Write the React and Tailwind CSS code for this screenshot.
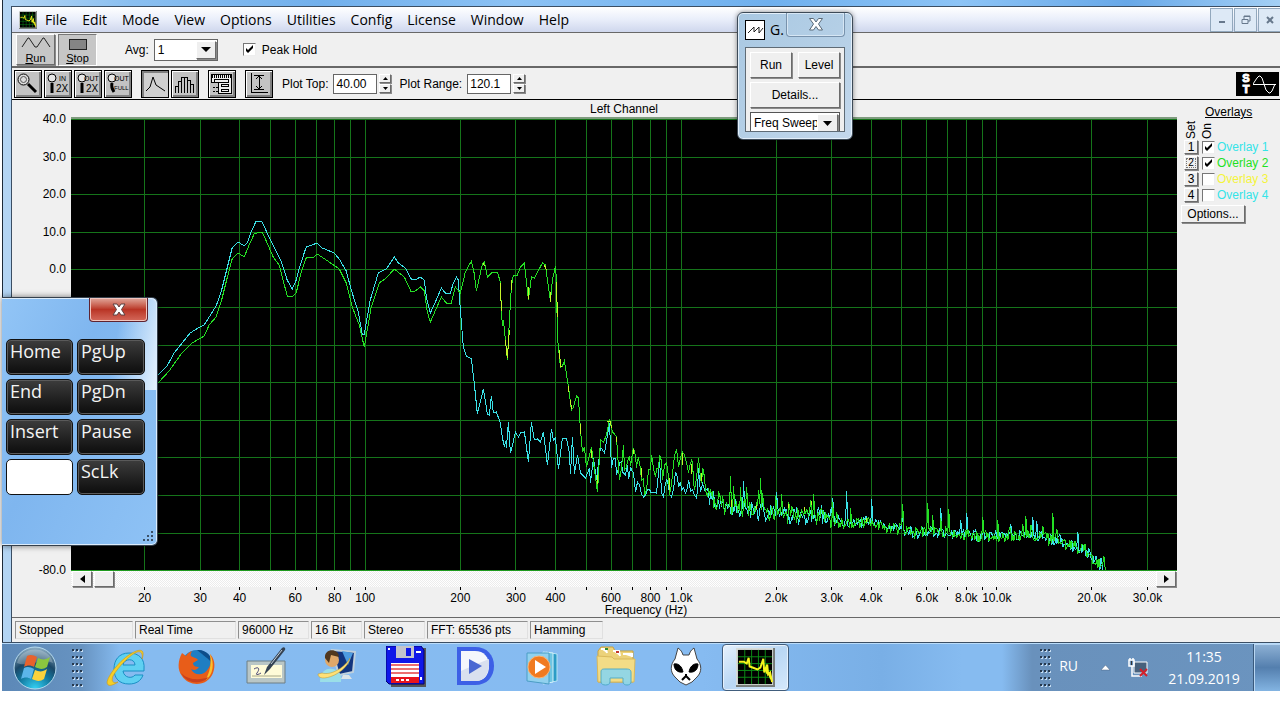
import { useState } from "react";

const MENU = ["File", "Edit", "Mode", "View", "Options", "Utilities", "Config", "License", "Window", "Help"];
const KEYS = ["Home", "PgUp", "End", "PgDn", "Insert", "Pause", "", "ScLk"];

// plot area in trace coordinates
const X0 = 72;
const Y0 = 119;
const PW = 1105;
const PH = 452;

const FREQS = [20, 30, 40, 50, 60, 70, 80, 90, 100, 200, 300, 400, 500, 600, 700, 800, 900, 1000, 2000, 3000, 4000, 5000, 6000, 7000, 8000, 9000, 10000, 20000, 30000];
const FREQ_LABELS = {
  20: "20", 30: "30", 40: "40", 60: "60", 80: "80", 100: "100",
  200: "200", 300: "300", 400: "400", 600: "600", 800: "800", 1000: "1.0k",
  2000: "2.0k", 3000: "3.0k", 4000: "4.0k", 6000: "6.0k", 8000: "8.0k", 10000: "10.0k",
  20000: "20.0k", 30000: "30.0k",
};
// levels not covered by the key pad
const LEVELS = [40, 30, 20, 10, 0, -80];

function freqPct(f) {
  const x = 73.5 + Math.log10(f / 20) * 315.5;
  return `${(x / PW) * 100}%`;
}

const CYAN = [
  [72, 452], [110, 415], [140, 393], [158, 376], [168, 366], [175, 353], [191, 333], [199, 328], [205, 325], [217, 306], [222, 292], [227, 272],
  [233, 248], [239, 242], [245, 246], [248, 243], [252, 232], [257, 221], [263, 222], [268, 233], [282, 261], [288, 280],
  [293, 289], [297, 280], [300, 268], [307, 247], [318, 243], [323, 248], [335, 253], [340, 259], [347, 271], [352, 290],
  [359, 312], [363, 334], [365, 334], [371, 300], [379, 273], [387, 269], [395, 257], [399, 263], [406, 268], [412, 279],
  [416, 280], [421, 277], [425, 280], [427, 297], [431, 313], [436, 302], [442, 288], [446, 293], [451, 293], [454, 283],
  [457, 277], [459, 280], [461, 310], [464, 347], [467, 356], [472, 359], [475, 384], [478, 414], [484, 389], [488, 414], [490, 415],
  [492, 396], [494, 413], [497, 412], [501, 423], [503, 438], [505, 446], [507, 440], [507, 448], [509, 422], [511, 453], [514, 441], [516, 432], [519, 437], [521, 433],
  [525, 432], [529, 462], [532, 422], [535, 440], [538, 439], [541, 442], [544, 432], [548, 465], [552, 429], [554, 440], [556, 438], [559, 469],
  [563, 438], [567, 438], [570, 453], [571, 474], [573, 437], [575, 474], [578, 455], [581, 473], [586, 478], [590, 468], [591, 483],
  [594, 458], [597, 480], [601, 447], [605, 453], [610, 423], [612, 468], [614, 458], [617, 475], [620, 463], [623, 472],
  [628, 465], [630, 475], [632, 470], [636, 492], [640, 485], [644, 497], [648, 489], [651, 492], [657, 493], [660, 462], [662, 493], [665, 488], [668, 481], [670, 494],
  [674, 489], [676, 472], [679, 487], [682, 490], [686, 493], [689, 480], [693, 490], [697, 498], [699, 468], [701, 492], [705, 490],
];

const GREEN = [
  [72, 460], [110, 425], [140, 401], [158, 384], [170, 371], [182, 354], [193, 343], [205, 336], [210, 325], [217, 317], [222, 302], [228, 278],
  [233, 259], [239, 253], [245, 257], [250, 245], [255, 234], [260, 232], [263, 232], [268, 243], [274, 257], [280, 265],
  [288, 296], [293, 297], [297, 293], [302, 272], [307, 258], [315, 257], [318, 254], [327, 260], [340, 269], [347, 283],
  [353, 307], [360, 325], [365, 347], [372, 307], [380, 283], [387, 278], [395, 269], [405, 277], [412, 292], [416, 291],
  [421, 287], [425, 291], [428, 312], [431, 322], [442, 297], [447, 303], [452, 303], [456, 287], [461, 293], [466, 272],
  [472, 261], [475, 274], [477, 291], [483, 264], [485, 262], [488, 277], [493, 272], [498, 272], [501, 282], [502, 310], [503, 326],
  [504, 320], [508, 360], [510, 320], [512, 287], [514, 275], [518, 275], [521, 267], [525, 263], [529, 300], [532, 277],
  [535, 278], [543, 263], [546, 265], [549, 287], [551, 301], [553, 280], [556, 266], [557, 280], [558, 337], [561, 367],
  [563, 366], [565, 361], [569, 387], [572, 410], [574, 407], [577, 396], [579, 398], [581, 430], [583, 452], [585, 447],
  [587, 467], [592, 447], [595, 470], [598, 492], [601, 440], [604, 442], [607, 435], [610, 419], [613, 432], [617, 437],
  [620, 480], [624, 445], [625, 470], [628, 461], [631, 466], [634, 448], [637, 468], [639, 458], [642, 480], [645, 495], [649, 470], [652, 455], [656, 477],
  [658, 468], [660, 455], [663, 480], [667, 463], [670, 495], [673, 473], [677, 449], [679, 467], [683, 452], [687, 463], [690, 466], [693, 463], [695, 490],
  [699, 458], [702, 483], [704, 470], [707, 494],
];

const FLOOR = [
  [708, 496], [725, 506], [750, 510], [775, 514], [800, 516], [830, 518], [850, 524], [870, 521], [885, 528], [905, 529],
  [915, 533], [930, 531], [945, 533], [960, 534], [975, 536], [1000, 536], [1020, 536], [1030, 533], [1045, 538], [1060, 540],
  [1070, 545], [1085, 550], [1092, 556], [1098, 562], [1103, 569], [1106, 570],
];
const CYAN_PEAKS = { 744: 481, 777: 492, 822: 505, 833: 498, 847: 491, 872: 499, 903: 506, 941: 508, 961: 520, 967: 513, 1011: 524, 1026: 518, 1033: 517, 1037: 521, 1078: 532, 1101: 558 };
const GREEN_PEAKS = { 713: 491, 719: 491, 731: 476, 734: 486, 741: 487, 747: 487, 759: 490, 761: 478, 763: 493, 776: 496, 782: 494, 789: 502, 811: 500, 814: 494, 833: 502, 851: 508, 862: 517, 903: 504, 928: 503, 933: 515, 941: 518, 949: 509, 983: 517, 998: 520, 1010: 527, 1023: 524, 1026: 516, 1031: 525, 1043: 526, 1053: 513, 1057: 529, 1104: 556 };

function floorAt(x) {
  for (let i = 1; i < FLOOR.length; i++) {
    if (x <= FLOOR[i][0]) {
      const [ax, ay] = FLOOR[i - 1];
      const [bx, by] = FLOOR[i];
      return ay + ((x - ax) / (bx - ax)) * (by - ay);
    }
  }
  return 570;
}

function noise(n) {
  const s = Math.sin(n * 12.9898) * 43758.5453;
  return (s - Math.floor(s)) * 2 - 1;
}

// adds a jittered midpoint between the hand-picked points above 600 Hz
function roughen(pts, seed) {
  const out = [];
  pts.forEach(([x, y], i) => {
    out.push([x, y]);
    const next = pts[i + 1];
    if (next && x > 612 && next[0] - x > 1) {
      out.push([Math.round((x + next[0]) / 2), Math.round((y + next[1]) / 2 + noise(x + seed) * 9)]);
    }
  });
  return out;
}

function tail(seed, peaks) {
  const pts = [];
  for (let x = 708; x <= 1105; x++) {
    const amp = x < 840 ? 9 : 6;
    const y = peaks[x] || floorAt(x) + noise(x + seed) * amp;
    pts.push([x, Math.min(570, Math.round(y))]);
  }
  return pts;
}

const toPoints = (pts) => pts.map((p) => p.join(",")).join(" ");
const cyanLine = toPoints([...roughen(CYAN, 5), ...tail(3, CYAN_PEAKS)]);
const greenLine = toPoints([...roughen(GREEN, 9), ...tail(77, GREEN_PEAKS), [1106, 570], [1177, 570]]);

const raised = "border border-t-white border-l-white border-r-[#6b6b6b] border-b-[#6b6b6b] shadow-[1px_1px_0_#8a8a8a]";

function Plot() {
  return (
    <svg className="block w-full h-[452px] bg-black" shapeRendering="crispEdges" role="img" aria-label="Left Channel spectrum">
      {FREQS.map((f) => (
        <line key={f} x1={freqPct(f)} x2={freqPct(f)} y1="0" y2="452" stroke="#15741a" />
      ))}
      {[...Array(13)].map((_, i) => (
        <line key={i} x1="0" x2="100%" y1={i * 37.6 + 0.5} y2={i * 37.6 + 0.5} stroke="#15741a" />
      ))}
      <svg width="100%" height="452" viewBox={`${X0} ${Y0} ${PW} ${PH}`} preserveAspectRatio="none" fill="none">
        <polyline points={cyanLine} stroke="#3be2e8" />
        <polyline points={greenLine} stroke="#24e024" />
        <path
          stroke="#c6f52a"
          d="M484 263l1 3M501 283l1 28M506 340l2 18l2 -28M512 290v-10M529 299v-12M545 265l2 5M551 292v10M557 282l1 35M560 350l1 16h2M569 386v6M571 400l1 9M581 424v10M592 450v8M598 475v9M608 421h3l1 7M617 437v5M634 449v5M642 468v9M670 478v12M683 453v12M692 464v10M702 473v8M732 500v7M757 505v4M789 508v-4M805 507v4M812 505v-4M867 522v-4"
        />
      </svg>
      <line x1="0" x2="100%" y1="451.5" y2="451.5" stroke="#1f9a1f" />
    </svg>
  );
}

function FreqAxis() {
  return (
    <svg className="block w-full h-[17px] overflow-visible text-xs">
      {FREQS.map((f) => (
        <g key={f}>
          <line x1={freqPct(f)} x2={freqPct(f)} y1="0" y2="3" stroke="#000" shapeRendering="crispEdges" />
          {FREQ_LABELS[f] && <text x={freqPct(f)} y="15" textAnchor="middle">{FREQ_LABELS[f]}</text>}
        </g>
      ))}
    </svg>
  );
}

function LevelAxis() {
  return (
    <svg className="block w-full h-[452px] overflow-visible text-xs">
      {LEVELS.map((db) => (
        <text key={db} x="54" y={(40 - db) * 3.76 + 4} textAnchor="end">{db.toFixed(1)}</text>
      ))}
    </svg>
  );
}

function CheckBox({ label, checked, className, textClass }) {
  const [on, setOn] = useState(checked);
  return (
    <label className={`flex items-center whitespace-nowrap ${className || ""}`}>
      <span className="relative block size-[13px] shrink-0">
        <input
          type="checkbox"
          checked={on}
          onChange={() => setOn(!on)}
          className="block size-[13px] appearance-none border border-t-[#777] border-l-[#777] border-r-[#eee] border-b-[#eee] bg-white"
        />
        {on && (
          <svg className="pointer-events-none absolute inset-0" width="13" height="13" viewBox="0 0 13 13">
            <path d="M3 5v3l2 2 5-5V2L5 7z" fill="#000" />
          </svg>
        )}
      </span>
      <span className={textClass}>{label}</span>
    </label>
  );
}

function ToolButton({ label, pressed, children }) {
  return (
    <button aria-label={label} className={`size-7 shrink-0 border border-black ${pressed ? "bg-[#d0d0d0] shadow-[inset_2px_2px_0_#808080]" : "bg-[#c3c3c3] shadow-[inset_1px_1px_0_#fff,inset_-2px_-2px_0_#808080]"}`}>
      <svg width="26" height="26" viewBox="0 0 26 26" fill="none" stroke="#000" shapeRendering="crispEdges">{children}</svg>
    </button>
  );
}

function ZoomTool({ label, top, bottom }) {
  const full = bottom === "FULL";
  return (
    <ToolButton label={label}>
      <g shapeRendering="auto">
        <circle cx="7" cy="7" r="4" fill="#e8e8e8" />
        <path d={full ? "M7 12c-1 4 0 6 2 9" : "M7 12v10"} strokeWidth="3" />
      </g>
      <g fill="#000" stroke="none">
        <text x={top === "IN" ? 14 : 9} y="10" fontSize="7">{top}</text>
        <text x={full ? 9 : 11} y={full ? 19 : 21} fontSize={full ? 6 : 10}>{bottom}</text>
      </g>
    </ToolButton>
  );
}

function Spinner({ name }) {
  const btn = `flex h-[9px] w-3 items-center justify-center bg-[#efefef] ${raised}`;
  return (
    <span className="mr-2 ml-[2px] flex flex-col gap-px">
      <button aria-label={`${name} up`} className={btn}><svg width="5" height="3"><path d="M0 3L2.5 0 5 3z" /></svg></button>
      <button aria-label={`${name} down`} className={btn}><svg width="5" height="3"><path d="M0 0L2.5 3 5 0z" /></svg></button>
    </span>
  );
}

function NumberField({ label, value }) {
  return (
    <>
      <label className="flex items-center gap-[5px] whitespace-nowrap">
        {label}
        <input defaultValue={value} className="h-5 w-11 border border-[#666] bg-white px-[2px] text-xs" />
      </label>
      <Spinner name={label} />
    </>
  );
}

function SpectrumIcon({ className }) {
  return (
    <svg className={className} viewBox="0 0 40 40" fill="none" aria-hidden="true">
      <rect width="40" height="40" fill="#777b78" />
      <rect width="38" height="38" fill="#d8dcd8" />
      <rect x="2" y="2" width="35" height="35" fill="#000" />
      <path d="M9 2v35M16 2v35M23 2v35M30 2v35M2 9h35M2 16h35M2 23h35M2 30h35" stroke="#0b8a16" />
      <path d="M3 14L8 14L11 16L13 10L14 19L17 20L22 22L25 20L28 11L29 25L32 17L33 27L35 25L37 35" stroke="#f5f51c" strokeWidth="2" />
      <path d="M30 20l2 6 2 1 2 5" stroke="#f5f51c" strokeWidth="2" />
    </svg>
  );
}

function TopBars() {
  const mdi = "flex h-6 w-[23px] items-center justify-center border border-[#92a8bd] bg-[#dde9f6]";
  return (
    <>
      <nav className="flex h-[25px] items-center bg-linear-to-b from-white via-[#e9eefa] to-[#cfd7ed] pl-[7px] font-['Open_Sans',sans-serif] text-sm">
        <SpectrumIcon className="mr-2 size-[18px]" />
        <div className="flex flex-1 gap-[15px]">
          {MENU.map((m) => <button key={m}>{m}</button>)}
        </div>
        <div className="-mr-px flex gap-px">
          <button aria-label="Minimize" className={mdi}><svg width="8" height="8"><path d="M1 6h6" stroke="#67788c" strokeWidth="2" /></svg></button>
          <button aria-label="Restore" className={mdi}><svg width="10" height="10" fill="none" stroke="#67788c"><path d="M3 4V1h6v5H7M1 4.5h6v4H1zM3 1.5h6" /></svg></button>
          <button aria-label="Close" className={mdi}><svg width="8" height="8"><path d="M1 1l6 6M7 1L1 7" stroke="#67788c" strokeWidth="2" /></svg></button>
        </div>
      </nav>
      <div className="flex h-9 items-center border-t border-b-2 border-[#686868] pl-1">
        <button className={`flex h-[31px] w-[39px] flex-col items-center bg-[#c6c6c6] text-[11px] leading-3 ${raised}`}>
          <svg width="32" height="17" fill="none" stroke="#222"><path d="M2 12L8 3h1l6 9h2l6-9h1l6 9" /></svg>
          <span><u>R</u>un</span>
        </button>
        <button className="ml-[3px] flex h-[32px] w-[39px] flex-col items-center border border-t-[#777] border-l-[#777] border-r-white border-b-white bg-[#c6c6c6] text-[11px] leading-3">
          <svg width="20" height="17"><rect x="1.5" y="4.5" width="17" height="10" fill="#858585" stroke="#222" /></svg>
          <span><u>S</u>top</span>
        </button>
        <label className="ml-7 flex items-center gap-[5px]">
          Avg:
          <span className="relative block">
            <select className="block h-[22px] w-16 appearance-none border border-[#666] bg-white pl-[3px] text-xs">
              <option>1</option>
            </select>
            <span className={`pointer-events-none absolute top-[2px] right-[2px] flex h-[18px] w-5 items-center justify-center bg-[#efefef] ${raised}`}>
              <svg width="10" height="5"><path d="M0 0h10L5 5z" /></svg>
            </span>
          </span>
        </label>
        <CheckBox label="Peak Hold" checked className="ml-[25px]" textClass="ml-[6px]" />
      </div>
      <div className="flex h-8 items-center border-b border-black pl-[2px]">
        <div className="flex gap-[2px]">
          <ToolButton label="Zoom">
            <g shapeRendering="auto">
              <circle cx="8.5" cy="8.5" r="5.5" fill="#ddd" /><circle cx="8.5" cy="8.5" r="3" stroke="#555" /><path d="M13 13l8 8" strokeWidth="3" />
            </g>
          </ToolButton>
          <ZoomTool label="Zoom in 2X" top="IN" bottom="2X" />
          <ZoomTool label="Zoom out 2X" top="OUT" bottom="2X" />
          <ZoomTool label="Zoom out full" top="OUT" bottom="FULL" />
        </div>
        <div className="ml-[9px] flex gap-[2px]">
          <ToolButton label="Line" pressed><path d="M4 20l4-4 3-10 3 8 3 2 6 4" shapeRendering="auto" /></ToolButton>
          <ToolButton label="Bars"><path d="M3.5 22v-7h3v7M6.5 15v-5h3v12M9.5 10V6.5h3V22M12.5 6.5h3V22M15.5 9.5h3V22M18.5 13.5h3V22" /></ToolButton>
        </div>
        <div className="ml-[9px] flex">
          <ToolButton label="Settings">
            <path d="M2.5 3.5h20v19h-13v-11h-7z" fill="#eee" /><path d="M3 5h19" strokeWidth="3" strokeDasharray="1 1" /><path d="M5.5 8.5h14v3h-14zM12.5 13.5h7v2h-7zM12.5 18.5h7v2h-7z" /><path d="M4 16h5M4 20h5" strokeDasharray="2 1" />
          </ToolButton>
        </div>
        <div className="mr-[9px] ml-[9px] flex">
          <ToolButton label="Scale"><path d="M5.5 2v19.5H22M8 4.5h10M8 18.5h10M13 5v13M10 8l3-3 3 3M10 15l3 3 3-3" /></ToolButton>
        </div>
        <NumberField label="Plot Top:" value="40.00" />
        <NumberField label="Plot Range:" value="120.1" />
        <div className="mr-px ml-auto flex h-6 w-[43px] shrink-0 items-center bg-black text-white">
          <div className="w-[17px] pl-[3px] text-center text-[11px] leading-[11px] font-black [-webkit-text-stroke:1px_white]">
            <div>S</div>
            <div>T</div>
          </div>
          <svg width="24" height="24" fill="none" stroke="#fff">
            <path d="M0 12.5h23M0 12l4-6 2-2h1l2 2 4 12 3 3h1l2-2 3-7" />
          </svg>
        </div>
      </div>
    </>
  );
}

function Overlays() {
  const rows = [
    ["Overlay 1", true, "text-[#35e4e8]"],
    ["Overlay 2", true, "text-[#1fe01f]"],
    ["Overlay 3", false, "text-[#f4f43c]"],
    ["Overlay 4", false, "text-[#35e4e8]"],
  ];
  return (
    <aside className="pl-[7px]">
      <h2 className="mt-[5px] pl-[21px] leading-[14px] underline">Overlays</h2>
      <div className="flex h-5 gap-px">
        <span className="w-[15px] rotate-180 leading-[15px] [writing-mode:vertical-rl]">Set</span>
        <span className="w-[15px] rotate-180 leading-[15px] [writing-mode:vertical-rl]">On</span>
      </div>
      {rows.map(([name, on, color], i) => (
        <div key={name} className="flex h-4 items-center gap-1">
          <button aria-label={`Set ${name}`} className={`flex h-[14px] w-[14px] items-center justify-center bg-[#efefef] leading-3 ${raised}`}>
            <span className={i === 1 ? "flex h-[10px] w-[10px] items-center justify-center border border-dotted border-[#777] text-[10px]" : ""}>{i + 1}</span>
          </button>
          <CheckBox label={name} checked={on} textClass={`ml-[2px] ${color}`} />
        </div>
      ))}
      <button className={`-ml-[3px] mt-[2px] h-[18px] w-16 bg-[#efefef] leading-4 ${raised}`}>Options...</button>
    </aside>
  );
}

function StatusBar() {
  const cell = "h-[18px] border border-t-[#8f8f8f] border-l-[#8f8f8f] border-r-[#e0e0e0] border-b-[#e0e0e0] pl-[3px] leading-4 whitespace-nowrap";
  return (
    <footer className="flex h-[25px] items-center gap-[2px] border-t border-[#686868] pl-[3px]">
      <span className={`${cell} w-[118px]`}>Stopped</span>
      <span className={`${cell} w-[101px]`}>Real Time</span>
      <span className={`${cell} w-[71px]`}>96000 Hz</span>
      <span className={`${cell} w-[51px]`}>16 Bit</span>
      <span className={`${cell} w-[61px]`}>Stereo</span>
      <span className={`${cell} w-[101px]`}>FFT: 65536 pts</span>
      <span className={`${cell} w-[73px]`}>Hamming</span>
    </footer>
  );
}

function Generator() {
  const btn = `h-[26px] bg-[#efefef] ${raised}`;
  return (
    <section className="absolute top-3 left-[737px] w-[116px] rounded-md border border-[#3d4a57] bg-linear-to-br from-[#a9c8e2] via-[#b4cfe6] to-[#c4d8ec] px-[7px] pb-[7px] shadow-[inset_0_0_0_1px_#e3effa,0_0_5px_#0007]">
      <header className="flex h-[34px]">
        <svg className="mt-[7px] border border-black bg-white" width="20" height="20" fill="none" stroke="#222"><path d="M2 12l6-6v5l5-5v6l4-5" /></svg>
        <h2 className="mt-[7px] ml-[5px] w-[16px] font-['Open_Sans',sans-serif] text-sm leading-[20px]">G.</h2>
        <button aria-label="Close generator" className="flex h-6 w-[59px] items-center justify-center rounded-b border border-t-0 border-[#7892ac] shadow-[inset_0_0_0_1px_#d6e6f4]">
          <svg width="16" height="15"><path d="M1.5 1.5h4L8 5l2.5-3.5h4L10.5 7l4 6h-4L8 9.500 5.5 13h-4l4-6z" fill="#fff" stroke="#5b6a78" /></svg>
        </button>
      </header>
      <div className="grid h-[85px] grid-cols-2 content-start gap-x-[6px] gap-y-1 overflow-hidden border border-[#5f6b75] bg-[#efefef] px-1 pt-1">
        <button className={btn}>Run</button>
        <button className={btn}>Level</button>
        <button className={`${btn} col-span-2`}>Details...</button>
        <div className="relative col-span-2">
          <select aria-label="Signal" className="block h-[22px] w-full appearance-none border border-[#555] bg-white pl-[3px] text-xs">
            <option>Freq Sweep</option>
          </select>
          <span className={`pointer-events-none absolute top-[2px] right-[2px] flex h-[18px] w-[21px] items-center justify-center bg-[#efefef] ${raised}`}>
            <svg width="9" height="5"><path d="M0 0h9L4.5 5z" /></svg>
          </span>
        </div>
      </div>
    </section>
  );
}

function KeyPad() {
  return (
    <section className="absolute top-[297px] left-[2px] h-[249px] w-[156px] rounded-r-md border border-l-0 border-[#35404c] bg-[linear-gradient(115deg,#92c5f6_0%,#7fb6ef_40%,#8ec2f5_100%)] pl-1 font-['Open_Sans',sans-serif] shadow-[inset_-1px_1px_0_#dcecfb,inset_0_-1px_0_#dcecfb,0_0_6px_#0008]">
      <div className="absolute top-[1px] right-[1px] h-[91px] w-[54px] rounded-tr bg-[linear-gradient(100deg,transparent_30%,#e4f1fd_100%)]" />
      <div className="relative flex h-[41px] justify-end pr-[9px]">
        <button aria-label="Close keyboard" className="flex h-6 w-[59px] items-center justify-center rounded-b border border-t-0 border-[#5e2330] bg-linear-to-b from-[#e0a79c] via-[#b93425] to-[#d4685a] shadow-[inset_0_0_0_1px_#f0c4bd]">
          <svg width="14" height="13"><path d="M1 1h4l2 3 2-3h4L9.5 6.5 13 12H9L7 9l-2 3H1l3.5-5.5z" fill="#fff" stroke="#5c4040" /></svg>
        </button>
      </div>
      <div className="relative grid grid-cols-[67px_68px] gap-1">
        {KEYS.map((k) => (
          <button
            key={k}
            aria-label={k || "Fn"}
            className={`flex h-9 items-start rounded-[5px] border border-[#111] pl-[3px] text-left text-lg leading-[23px] text-[#f4f4f4] ${k ? "bg-linear-to-b from-[#3d3d3d] to-[#0d0d0d] shadow-[inset_0_0_0_1px_#5a5a5a]" : "bg-white"}`}
          >
            {k}
          </button>
        ))}
      </div>
      <svg className="absolute right-[3px] bottom-[3px]" width="11" height="11" fill="#3c5168"><path d="M8 0h2v2H8zM4 4h2v2H4zM8 4h2v2H8zM0 8h2v2H0zM4 8h2v2H4zM8 8h2v2H8z" /></svg>
    </section>
  );
}

function Grip() {
  return (
    <svg width="11" height="40" aria-hidden="true">
      {[1, 8, 15, 22, 29, 36].map((y) => [0, 4, 8].map((x) => (
        <g key={`${x}-${y}`}><rect x={x + 1} y={y + 1} width="2" height="2" fill="#c5dcf2" /><rect x={x} y={y} width="2" height="2" fill="#26384d" /></g>
      )))}
    </svg>
  );
}

function StartOrb() {
  return (
    <svg width="44" height="44" viewBox="0 0 44 44">
      <defs>
        <radialGradient id="orb" cx=".5" cy="1" r="1"><stop offset="0" stopColor="#35d3f5" /><stop offset=".4" stopColor="#12789f" /><stop offset=".65" stopColor="#1b4767" /><stop offset="1" stopColor="#8fb0c6" /></radialGradient>
      </defs>
      <circle cx="22" cy="22" r="21" fill="url(#orb)" stroke="#b5d9ed" />
      <path d="M4 17C8-1 36-1 40 17 30 11 14 22 4 17z" fill="#fff" opacity=".25" />
      <path d="M14 10c3-2 7-1 10 1l-3 10c-3-2-7-2-10 0z" fill="#e8622c" />
      <path d="M25 12c4 2 8 2 12-1l-3 10c-4 3-8 2-12 0z" fill="#8cc63f" />
      <path d="M11 22c3-2 7-1 10 1l-3 10c-3-2-7-2-10 0z" fill="#5bb5ea" />
      <path d="M22 24c4 2 8 2 12-1l-3 10c-4 3-8 2-12 0z" fill="#fbd23c" />
    </svg>
  );
}

const TASKS = [
  ["Internet Explorer", (
    <>
      <path d="M38 23c1-10-5-16-15-16S8 14 8 23s5 15 15 15c7 0 12-3 14-9h-8c-3 4-11 3-12-4h21zM17 19c1-7 12-7 12 0z" fill="#5fd0f2" stroke="#1a8fc4" />
      <path d="M36 13c3-8 0-11-8-7C17 11 3 27 1 36c0 5 5 4 11 0-5 2-7-1-5-6C13 20 24 9 31 6c4-1 6 1 5 7z" fill="#f5cf27" stroke="#c9961a" strokeWidth=".6" />
    </>
  )],
  ["Firefox", (
    <>
      <circle cx="21" cy="20" r="16" fill="#1f7ec2" />
      <path d="M21 4c9-1 15 6 15 13-4-5-8-7-15-13z" fill="#0d4d8a" />
      <path d="M6 7c-4 7-5 17 0 23 8 12 26 10 31-3 3-8 1-15-3-19 1 7 1 11-2 15-4 7-14 7-17 0 3 2 6 1 8-2-3 0-6-1-6-4l5-3c-2-3-5-2-7-4-1-1 0-3 1-5-3 1-5 3-6 5z" fill="#e85d19" />
      <path d="M34 8c5 9 3 21-4 26 3-8 6-14 4-26z" fill="#fbc12c" />
      <path d="M5 27c5 10 19 13 28 4-8 3-20 4-28-4z" fill="#c9401c" />
    </>
  )],
  ["Input Panel", (
    <>
      <path d="M1 15h38v22H1z" fill="#b9c6c6" stroke="#6d7e86" /><path d="M5 19h31v13H5z" fill="#fffbd8" />
      <path d="M6 30h29" stroke="#a8a888" /><path d="M8 23c5-3 6 0 3 4-2 2 1 2 4 0" fill="none" stroke="#4b4776" />
      <path d="M18 29l3-8L36 2c2-2 4 0 3 2L24 23z" fill="#344252" /><path d="M25 18L36 4" stroke="#c5d0da" />
    </>
  )],
  ["Remote Desktop", (
    <>
      <path d="M16 4l23 2-2 20-14 3z" fill="#12357f" stroke="#bfd0dc" strokeWidth="2" /><path d="M26 5l11 2-5 12z" fill="#4e9ce0" />
      <path d="M27 29h6l3 4H25z" fill="#dce4e8" /><circle cx="16" cy="14" r="7" fill="#e0a869" /><path d="M9 12c-1-10 14-10 14-1l-8-2-2 8z" fill="#51381f" />
      <path d="M4 36c0-12 8-14 12-13 6 0 10 5 9 13z" fill="#9adfe8" /><path d="M2 28c0 10 29 0 32-16-4 8-18 18-28 15z" fill="#ffe176" stroke="#b99431" strokeWidth=".5" />
    </>
  )],
  ["Total Commander", (
    <>
      <path d="M3 2h37v39H5z" fill="#555" /><path d="M0 0h35l3 4v34H3l-3-3z" fill="#1017e8" stroke="#00006c" />
      <path d="M10 0h18v12H10z" fill="#c4c4cc" /><path d="M20 2h5v8h-5z" fill="#1017e8" />
      <path d="M5 17h28v20H5z" fill="#fff" /><path d="M5 19h28M5 23h28M5 27h28" stroke="#ec7070" strokeWidth="2" /><path d="M5 31h28v6H5z" fill="#e8151c" /><path d="M10 34h14" stroke="#fff" strokeWidth="2" strokeDasharray="3 2" /><path d="M30 6h5M2 3h2M35 34v-3" stroke="#fff" strokeWidth="2" />
    </>
  )],
  ["Player", (
    <>
      <path d="M1 1h18c12 0 19 8 19 19s-7 19-19 19H1z" fill="#3d60e6" /><path d="M5 5h14c9 0 14 6 14 15s-5 15-14 15H5z" fill="#f5f7fc" />
      <path d="M5 25l11-5 17-7c1 14-4 22-13 22H5z" fill="#d9e0ef" /><path d="M13 13l13 7-13 8z" fill="#4a68d2" />
    </>
  )],
  ["Media Player", (
    <>
      <path d="M20 6l11 2v27l-11 2z" fill="#2c9cc6" stroke="#b7e5f5" /><path d="M17 6l10 1v29l-10 2z" fill="#6ec5e3" stroke="#d3f0fa" />
      <path d="M1 7h22v31L1 35z" fill="#91d1ee" stroke="#4b9dc5" /><circle cx="13" cy="21" r="11" fill="#f07a20" stroke="#f9b479" /><path d="M9 14l11 7-11 7z" fill="#fff" />
    </>
  )],
  ["Explorer", (
    <>
      <path d="M2 5l3-4h12l2 4h18v31H2z" fill="#ecd27a" stroke="#c8a13f" /><path d="M5 3h5l1 4M17 5h6l1 5M27 8h9v3" fill="#fff" stroke="#fff" strokeWidth="2" />
      <path d="M9 3h3" stroke="#318b35" strokeWidth="2" /><path d="M20 6h3" stroke="#c4372c" strokeWidth="2" /><path d="M1 10l15 1 2 2h21l-1 23H2z" fill="#f3dc86" stroke="#d9b95c" />
      <path d="M5 26c0-3 2-3 4-3h21c4 0 5 1 5 4v9c0 4-8 4-8 0v-4H14v4c0 4-9 4-9 0z" fill="#8fd6e9" stroke="#4eabc8" opacity=".95" />
    </>
  )],
  ["foobar2000", (
    <>
      <path d="M12 2c3 2 4 4 5 7h6c1-3 2-5 5-7l3 11c5 6 5 13 0 18l-5 5-6 3-6-3-5-5c-5-5-5-12 0-18z" fill="#fff" stroke="#444" />
      <path d="M8 18c5-1 8 3 9 8-6 1-9-3-9-8zM32 18c-5-1-8 3-9 8 6 1 9-3 9-8z" fill="#000" stroke="#000" /><path d="M16 34l4-4 4 4M20 28v3" fill="none" stroke="#000" strokeWidth="2" />
    </>
  )],
];

function Taskbar() {
  return (
    <div className="ml-[2px] flex h-[48px] items-center border-t border-[#b9dcfa] bg-[linear-gradient(90deg,#5c88b7_0px,#6793c1_80px,#86bbf0_118px,#86bbf1_700px,#79afe6_880px,#86bbf0_960px,#86bbf0_1000px,#6991bc_1030px,#6b94bf_100%)] font-['Open_Sans',sans-serif] text-white">
      <button aria-label="Start" className="ml-[11px]"><StartOrb /></button>
      <span className="mr-[9px] ml-[15px]"><Grip /></span>
      <div className="flex gap-[2px]">
        {TASKS.map(([name, icon]) => (
          <button key={name} aria-label={name} className="flex h-[46px] w-[68px] items-center justify-center">
            <svg width="40" height="42" viewBox="0 0 40 42" fill="none">{icon}</svg>
          </button>
        ))}
        <button aria-label="Spectrum analyzer" className="flex h-[47px] w-[67px] items-center justify-center rounded-sm border border-[#415d7c] bg-linear-to-br from-[#e6f1fc] via-[#b9d7f4] to-[#d6e9fb] shadow-[inset_0_0_0_1px_#fff9]">
          <SpectrumIcon className="size-[39px]" />
        </button>
      </div>
      <div className="ml-auto flex h-full items-center">
        <Grip />
        <button className="ml-2 pb-1 text-sm">RU</button>
        <button aria-label="Show hidden icons" className="ml-[22px]"><svg width="11" height="7"><path d="M1 6l4.5-5L10 6z" fill="#fff" stroke="#4a6280" strokeWidth=".5" /></svg></button>
        <button aria-label="Network" className="ml-[17px]">
          <svg width="21" height="21" fill="none">
            <path d="M6 5h13v11H6z" fill="#47617d" stroke="#fff" /><path d="M1 3h5v6H1zM2 1v2M5 1v2M4 9v10h10" stroke="#fff" strokeWidth="1.5" /><path d="M3 4h1v4H3z" fill="#333" /><path d="M12 12l7 7M19 12l-7 7" stroke="#d3202a" strokeWidth="2" />
          </svg>
        </button>
        <time className="w-[104px] pl-[6px] text-center text-sm leading-[22px]">11:35<br />21.09.2019</time>
        <button aria-label="Show desktop" className="h-full w-[27px] border-l border-[#39597c] bg-linear-to-b from-[#8fb2d5] via-[#547fae] to-[#83b4e2] shadow-[inset_1px_1px_0_#b8d6f2]" />
      </div>
    </div>
  );
}

export default function App() {
  const arrow = `flex h-4 w-5 items-center justify-center bg-[#efefef] ${raised}`;
  return (
    <div className="relative min-h-screen overflow-hidden bg-white font-['Liberation_Sans',Arial,sans-serif] text-xs text-black">
      <div className="ml-[2px] border-l border-[#1d2a38] bg-[linear-gradient(90deg,#b4d5f3_0%,#8abff0_10%,#72b0ec_25%,#8cc2f4_40%,#6fb0ee_60%,#8dc4f6_75%,#68a8e8_88%,#a4d0f5_100%)] pt-[6px] pl-2">
        <main className="border-t border-l border-[#3b4e63] bg-[#f0f0f0]">
          <TopBars />
          <div className="grid grid-cols-[59px_1fr_103px]">
            <div className="pt-[19px]"><LevelAxis /></div>
            <div className="min-w-0">
              <h1 className="h-[17px] text-center leading-[18px]">Left Channel</h1>
              <div className="h-[2px] bg-[#7f9c7f]" />
              <Plot />
              <div className="flex h-4 justify-between bg-[repeating-conic-gradient(#fff_0_25%,#ececec_0_50%)] bg-[length:2px_2px] pr-px pl-px">
                <div className="flex gap-[2px]">
                  <button aria-label="Scroll left" className={arrow}><svg width="5" height="8"><path d="M5 0v8L0 4z" /></svg></button>
                  <button aria-label="Scroll thumb" className={arrow} />
                </div>
                <button aria-label="Scroll right" className={arrow}><svg width="5" height="8"><path d="M0 0v8l5-4z" /></svg></button>
              </div>
              <FreqAxis />
            </div>
            <Overlays />
          </div>
          <p className="h-[13px] text-center leading-3">Frequency (Hz)</p>
          <StatusBar />
        </main>
      </div>
      <div className="ml-[2px] h-px bg-[#3b4e63]" />
      <Taskbar />
      <Generator />
      <KeyPad />
    </div>
  );
}
